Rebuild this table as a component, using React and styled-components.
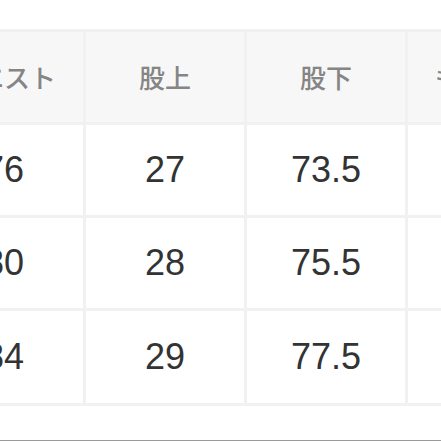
import React from "react";
import styled, { createGlobalStyle } from "styled-components";

const Global = createGlobalStyle`
  html, body { margin: 0; padding: 0; background: #ffffff; }
  body { overflow: hidden; font-family: "Liberation Sans", Arial, sans-serif; }
`;

const Page = styled.div`
  width: 441px;
  height: 441px;
  overflow: hidden;
  padding-top: 29px;
  box-sizing: border-box;
  background: #fff;
`;

const Table = styled.div`
  display: grid;
  grid-template-columns: repeat(${(p) => p.$cols}, 158px);
  grid-template-rows: 90px 90px 90px 92px;
  gap: 3px;
  padding: 3px;
  background: #f1f1f1;
  width: max-content;
  margin-left: -78px;
`;

const Cell = styled.div`
  display: flex;
  align-items: center;
  justify-content: center;
  background: ${(p) => (p.$head ? "#f7f7f7" : "#ffffff")};
  color: ${(p) => (p.$head ? "#858585" : "#333333")};
  font-family: ${(p) =>
    p.$head
      ? '"Noto Sans CJK JP", "Noto Sans", sans-serif'
      : '"Liberation Sans", Arial, sans-serif'};
  font-size: ${(p) => (p.$head ? "26px" : "36px")};
  font-weight: ${(p) => (p.$head ? 500 : 400)};
  line-height: 1;
  white-space: nowrap;
`;

const Footer = styled.div`
  margin-top: 34px;
  height: 1px;
  background: #9a9a9a;
`;

const heads = ["ウエスト", "股上", "股下", "もも周り"];
const rows = [
  ["76", "27", "73.5", "31.5"],
  ["80", "28", "75.5", "32.5"],
  ["84", "29", "77.5", "33.5"],
];

export default function App() {
  return (
    <>
      <Global />
      <Page>
        <Table $cols={heads.length}>
          {heads.map((h) => (
            <Cell $head key={h}>
              {h}
            </Cell>
          ))}
          {rows.map((r, i) =>
            r.map((v, j) => <Cell key={`${i}-${j}`}>{v}</Cell>)
          )}
        </Table>
        <Footer />
      </Page>
    </>
  );
}
